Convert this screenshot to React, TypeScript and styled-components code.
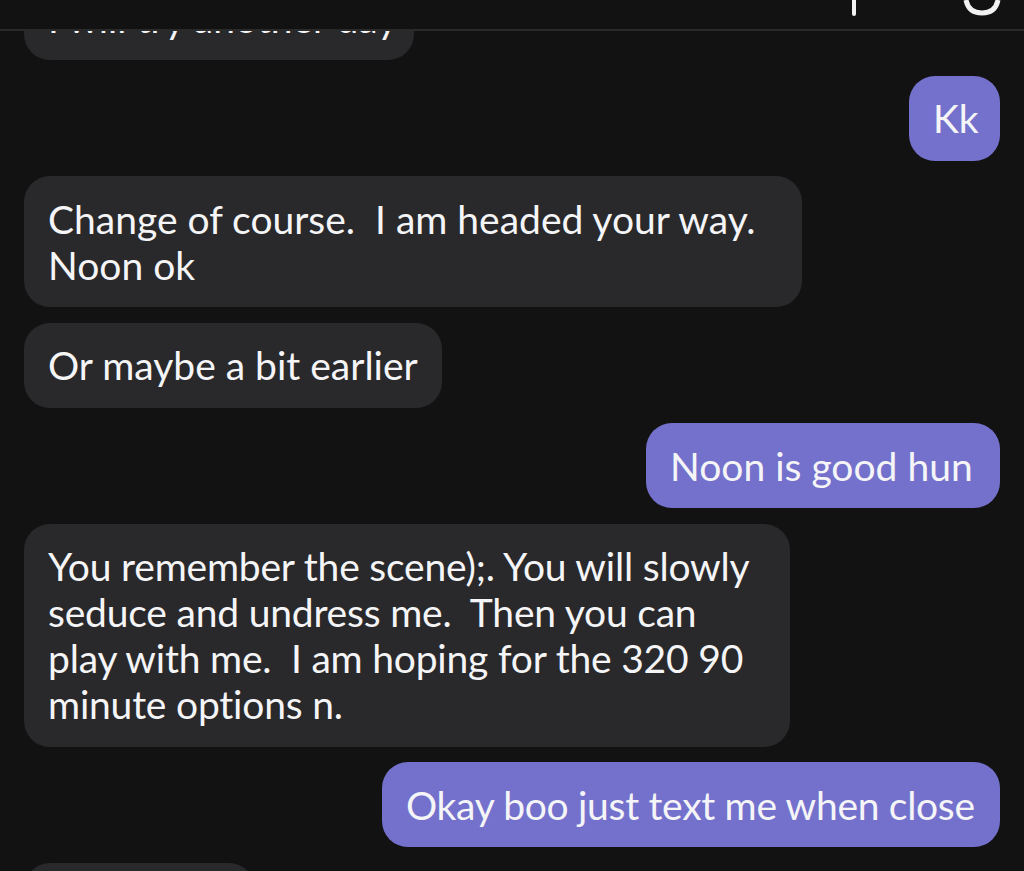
import React from 'react';
import styled, { createGlobalStyle } from 'styled-components';

const GlobalStyle = createGlobalStyle`
  html, body {
    margin: 0;
    padding: 0;
    background: #121212;
  }
  body {
    font-family: Lato, "Open Sans", "Liberation Sans", sans-serif;
    -webkit-font-smoothing: antialiased;
  }
`;

const Screen = styled.div`
  position: relative;
  width: 1024px;
  height: 871px;
  overflow: hidden;
  background: #121212;
`;

const TopBar = styled.div`
  position: absolute;
  top: 0;
  left: 0;
  right: 0;
  height: 29px;
  background: #121212;
  border-bottom: 2px solid #2a2a2a;
  z-index: 2;
`;

const BarIcon = styled.svg<{ $left: number }>`
  position: absolute;
  top: 0;
  left: ${({ $left }) => $left}px;
`;

const Thread = styled.div`
  display: flex;
  flex-direction: column;
  gap: 15.5px;
  margin-top: -25px;
  padding: 0 24px;
`;

const Row = styled.div<{ $mine?: boolean }>`
  display: flex;
  justify-content: ${({ $mine }) => ($mine ? 'flex-end' : 'flex-start')};
`;

const Bubble = styled.div<{ $mine?: boolean; $width: number; $squeeze?: number }>`
  box-sizing: border-box;
  width: ${({ $width }) => $width}px;
  min-height: 85px;
  padding: 19.5px 24px;
  border-radius: 26px;
  background: ${({ $mine }) => ($mine ? '#7471cd' : '#29292b')};
  color: #f5f5f7;
  font-size: 39px;
  line-height: 46px;
  letter-spacing: ${({ $squeeze }) => $squeeze ?? 0}px;
  white-space: pre;
`;

type Msg = { mine?: boolean; width: number; squeeze?: number; lines: string[] };

const messages: Msg[] = [
  { width: 390, lines: ['I will try another day'] },
  { mine: true, width: 91, lines: ['Kk'] },
  { width: 778, lines: ['Change of course.  I am headed your way.', 'Noon ok'] },
  { width: 418, lines: ['Or maybe a bit earlier'] },
  { mine: true, width: 354, lines: ['Noon is good hun'] },
  {
    width: 766,
    squeeze: -0.2,
    lines: [
      'You remember the scene);. You will slowly',
      'seduce and undress me.  Then you can',
      'play with me.  I am hoping for the 320 90',
      'minute options n.',
    ],
  },
  { mine: true, width: 618, squeeze: -0.3, lines: ['Okay boo just text me when close'] },
  // last one only peeks in at the bottom edge
  { width: 231, lines: [] },
];

export default function App() {
  return (
    <Screen>
      <GlobalStyle />
      <TopBar>
        <BarIcon $left={849} width="10" height="16" viewBox="0 0 10 16">
          <path d="M5 0 V14" stroke="#f2f2f2" strokeWidth="4" strokeLinecap="round" />
        </BarIcon>
        <BarIcon $left={960} width="44" height="16" viewBox="0 0 44 16">
          <path d="M6 0 C8 10 14 13 22 13 C30 13 36 10 38 0" fill="none" stroke="#f2f2f2" strokeWidth="5" />
        </BarIcon>
      </TopBar>
      <Thread>
        {messages.map((m, i) => (
          <Row key={i} $mine={m.mine}>
            <Bubble $mine={m.mine} $width={m.width} $squeeze={m.squeeze}>
              {m.lines.map((l, j) => (
                <div key={j}>{l}</div>
              ))}
            </Bubble>
          </Row>
        ))}
      </Thread>
    </Screen>
  );
}
